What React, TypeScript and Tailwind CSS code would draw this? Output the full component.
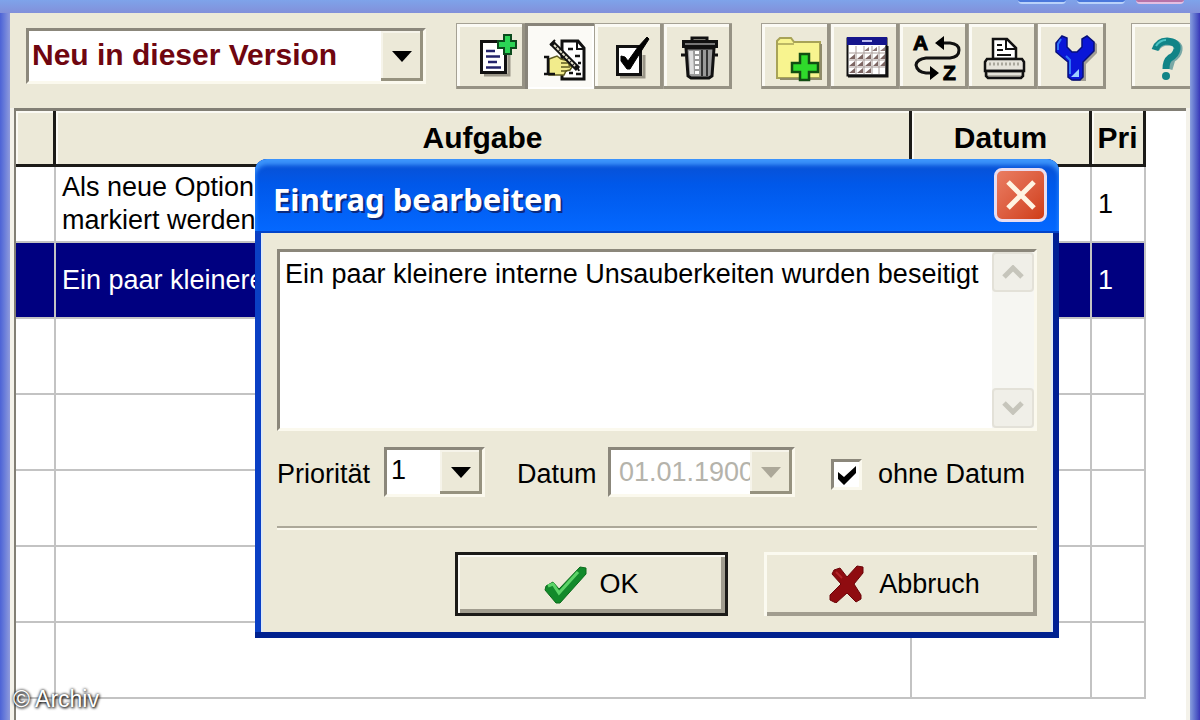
import React from 'react';
import { clsx } from 'clsx';

interface Task {
  lines: string[];
  priority: string;
  selected?: boolean;
}

const tasks: Task[] = [
  { lines: ['Als neue Option', 'markiert werden'], priority: '1' },
  { lines: ['Ein paar kleinere'], priority: '1', selected: true },
  { lines: [], priority: '' },
  { lines: [], priority: '' },
  { lines: [], priority: '' },
  { lines: [], priority: '' },
  { lines: [], priority: '' },
];

const Glyph = ({ children }: { children: React.ReactNode }) => (
  <svg viewBox="0 0 69 66" className="h-[66px] w-[69px] shrink-0" aria-hidden="true">
    {children}
  </svg>
);

const NewEntryIcon = () => (
  <Glyph>
    <path d="M28 52h25V28" fill="none" stroke="#9a9688" strokeWidth="3" />
    <rect x="25.500" y="18.500" width="24" height="31" fill="#fff" stroke="#111" strokeWidth="3" />
    <path d="M30 28h9M30 33.500h14M32 39h9M30 44.500h15" stroke="#23236b" strokeWidth="2.500" />
    <path d="M48 12h7v6h5v7h-5v6h-7v-6h-6v-7h6z" fill="#2bd455" stroke="#0b4a1c" strokeWidth="2" />
  </Glyph>
);

const EditIcon = () => (
  <Glyph>
    <path d="M37 18h16l6 7v31H37z" fill="#fff" stroke="#111" strokeWidth="3" />
    <path d="M52 18v8h7" fill="none" stroke="#111" strokeWidth="2" />
    <path d="M43 26h5M50 33h5M53 40h3M44 50h4M51 51h5" stroke="#111" strokeWidth="2.500" />
    <path d="M24 36l8-3 4 3 8 2v4l3 2-2 3-4 1-2 4H24z" fill="#f2ec8c" stroke="#5d5a20" strokeWidth="1.500" />
    <path d="M36 40h9M36 44h9M36 48h6" stroke="#5d5a20" strokeWidth="1.500" />
    <path d="M19 34h4v17h-4M23 51h7" fill="none" stroke="#111" strokeWidth="2.500" />
    <path d="M27 20l26 26" stroke="#111" strokeWidth="6" />
    <path d="M29 22l21 21" stroke="#e8e4cf" strokeWidth="2" strokeDasharray="3 1" />
    <path d="M25 22l5-5M52 43l2 5" stroke="#111" strokeWidth="2" />
  </Glyph>
);

const DoneIcon = () => (
  <Glyph>
    <path d="M26 54h24V32" fill="none" stroke="#9a9688" strokeWidth="3" />
    <rect x="23.500" y="23.500" width="23" height="28" fill="#fff" stroke="#111" strokeWidth="3" />
    <path d="M27 33l4 1 3 4 10-14 9-10 2 2-9 14-10 16h-3l-6-8z" fill="#000" stroke="#000" />
  </Glyph>
);

const TrashIcon = () => (
  <Glyph>
    <path d="M29 18v-3h15v3" fill="none" stroke="#111" strokeWidth="3" />
    <rect x="20.500" y="18.500" width="33" height="5" fill="#777" stroke="#111" strokeWidth="3" />
    <path d="M23 25h28l-2 28-3 2H28l-3-2z" fill="#9a9a9a" stroke="#111" strokeWidth="3" />
    <path d="M28 28l1 23" stroke="#ddd" strokeWidth="4" />
    <path d="M34 28v24" stroke="#fff" strokeWidth="4" strokeDasharray="3 2" />
    <path d="M39 27v26M44 27v26" stroke="#333" strokeWidth="2" />
    <path d="M18 32h4M52 32h3" stroke="#111" strokeWidth="3" />
  </Glyph>
);

const NewFolderIcon = () => (
  <Glyph>
    <path d="M16 55V18l3-3h11l3 4h26v36z" fill="#f8f48f" stroke="#a8a357" strokeWidth="2" />
    <path d="M17 21h16" stroke="#a8a357" strokeWidth="1.500" />
    <path d="M60 21v35H19" fill="none" stroke="#8f8b6a" strokeWidth="2" />
    <path d="M39 31h9v9h9v9h-9v8h-9v-8h-8v-9h8z" fill="#2fdb2b" stroke="#124d12" strokeWidth="2.500" />
  </Glyph>
);

const CalendarIcon = () => (
  <Glyph>
    <rect x="17.500" y="15.500" width="39" height="37" fill="#fff" stroke="#111" strokeWidth="2" />
    <rect x="17" y="14" width="40" height="8" fill="#15158c" />
    <path d="M32 18h10" stroke="#b9b9ee" strokeWidth="2" />
    <path d="M34 28l5-4v4zM42 28l5-4v4zM50 28l5-4v4z" fill="#8c7775" />
    <path
      d="M19 36l6-5v5zM27 36l6-5v5zM35 36l6-5v5zM43 36l5-5v5zM50 36l5-5v5zM19 43l6-5v5zM27 43l6-5v5zM35 43l6-5v5zM43 43l5-5v5zM50 43l5-5v5zM19 50l6-5v5zM27 50l6-5v5zM35 50l6-5v5z"
      fill="#7d6663"
    />
    <path d="M19 30h37M19 37h37M19 44h37M26 23v28M34 23v28M42 23v28M49 23v28" stroke="#a89b98" />
    <path d="M18 53h39V23" fill="none" stroke="#111" strokeWidth="3" />
  </Glyph>
);

const SortIcon = () => (
  <Glyph>
    <text x="14" y="27" fontFamily="Liberation Sans, sans-serif" fontWeight="700" fontSize="21" stroke="#000">A</text>
    <text x="44" y="57" fontFamily="Liberation Sans, sans-serif" fontWeight="700" fontSize="21" stroke="#000">Z</text>
    <path
      d="M42 20h9q9 1 9 7q0 7-9 8H27q-9 1-10 7q1 7 10 8h5"
      fill="none"
      stroke="#111"
      strokeWidth="3"
    />
    <path d="M36 20l9-7v14zM40 50l-9-7v14z" fill="#000" />
  </Glyph>
);

const PrinterIcon = () => (
  <Glyph>
    <path d="M25 36V16h14l9 9v11z" fill="#fff" stroke="#111" strokeWidth="2.500" />
    <path d="M38 16v10h10M29 22h5M29 27h6M29 32h14" fill="none" stroke="#111" strokeWidth="2" />
    <path d="M19 36h35l2 3v9H17v-9z" fill="#e6e3da" stroke="#111" strokeWidth="2.500" />
    <path d="M21 41h31" stroke="#aaa79c" strokeWidth="3" strokeDasharray="2 2" />
    <path d="M18 48h37v5l-2 2H20l-2-2z" fill="#b5b2a8" stroke="#111" strokeWidth="2.500" />
    <path d="M20 51h33" stroke="#f4f2ea" strokeWidth="1.500" />
  </Glyph>
);

const WrenchIcon = () => (
  <Glyph>
    <path d="M28 17v9l5 6h7l5-6v-8l9-2 6 5v9l-11 11v17H36V42l-8-9z" fill="#a19e94" />
    <path
      d="M25 13l5 2v9l5 5h5l5-5v-8l5-3 7 6v9L46 39v15l-3 3h-8l-4-3V39L19 29v-9z"
      fill="#0a16d8"
      stroke="#07107a"
      strokeWidth="1.500"
    />
    <path d="M24 16l-3 5v6M29 33l4 4v14" fill="none" stroke="#2f74f5" strokeWidth="2" />
    <path d="M34 54l8-8v8z" fill="#9cd0ff" />
  </Glyph>
);

const HelpIcon = () => (
  <Glyph>
    <path d="M25 26q3-7 13-7q11 1 10 8q-1 6-7 9l-3 10" fill="none" stroke="#79a8a6" strokeWidth="7" />
    <path d="M24 27q3-9 12-9q11 1 10 8q-1 6-7 9q-4 3-4 11" fill="none" stroke="#118487" strokeWidth="7" />
    <path d="M25 23q4-6 10-6" fill="none" stroke="#4cc4c4" strokeWidth="2" />
    <circle cx="35" cy="53" r="4" fill="#118487" />
  </Glyph>
);

interface Tool {
  label: string;
  icon: React.ReactNode;
  pressed?: boolean;
}

const toolGroups: Tool[][] = [
  [
    { label: 'Neuer Eintrag', icon: <NewEntryIcon /> },
    { label: 'Eintrag bearbeiten', icon: <EditIcon />, pressed: true },
    { label: 'Erledigt', icon: <DoneIcon /> },
    { label: 'Eintrag entfernen', icon: <TrashIcon /> },
  ],
  [
    { label: 'Neue Liste', icon: <NewFolderIcon /> },
    { label: 'Kalender', icon: <CalendarIcon /> },
    { label: 'Sortieren', icon: <SortIcon /> },
    { label: 'Drucken', icon: <PrinterIcon /> },
    { label: 'Einstellungen', icon: <WrenchIcon /> },
  ],
  [{ label: 'Hilfe', icon: <HelpIcon /> }],
];

const ToolButton = ({ label, icon, pressed }: Tool) => (
  <button
    type="button"
    aria-label={label}
    aria-pressed={pressed}
    className={clsx(
      'flex h-[66px] w-[69px] shrink-0 items-center justify-center overflow-hidden',
      pressed
        ? 'bg-[#fbfaf6] shadow-[inset_3px_3px_0_#88847a,inset_-2px_-2px_0_#ffffff]'
        : 'bg-[#ece9d8] shadow-[inset_1px_1px_0_#a5a194,inset_-3px_-3px_0_#969284,inset_4px_4px_0_#fbfaf4]'
    )}
  >
    {icon}
  </button>
);

interface ComboProps {
  id: string;
  value: string;
  disabled?: boolean;
  label?: string;
  className: string;
  selectClassName: string;
}

const Combo = ({ id, value, disabled, label, className, selectClassName }: ComboProps) => (
  <div
    className={clsx(
      'relative shrink-0 border-[3px] border-t-[#8b877b] border-r-[#fbf9ee] border-b-[#fbf9ee] border-l-[#8b877b] bg-white',
      className
    )}
  >
    <select
      id={id}
      aria-label={label}
      defaultValue={value}
      disabled={disabled}
      className={clsx(
        'block h-full w-full appearance-none overflow-hidden bg-transparent pr-[42px] whitespace-nowrap opacity-100 outline-none',
        selectClassName
      )}
    >
      <option value={value}>{value}</option>
    </select>
    <span className="pointer-events-none absolute inset-y-0 right-0 flex w-[42px] items-center justify-center bg-[#ece9d8] shadow-[inset_-3px_-3px_0_#96927f,inset_2px_2px_0_#f6f4ea]">
      <svg viewBox="0 0 20 11" className="h-[11px] w-5" aria-hidden="true">
        <path d="M0 0h20L10 11z" fill={disabled ? '#aca899' : '#000'} />
      </svg>
    </span>
  </div>
);

const Toolbar = () => (
  <header className="flex h-[95px] shrink-0 items-start overflow-hidden bg-[#ece9d8] pt-[10px] pl-4">
    <Combo
      id="list"
      label="Liste"
      value="Neu in dieser Version"
      className="mt-[5px] h-[56px] w-[400px]"
      selectClassName="pb-1 pl-[3px] text-[30px] font-bold text-[#6f0610]"
    />
    <div className="ml-[30px] flex gap-[29px]">
      {toolGroups.map((group) => (
        <div key={group[0].label} className="flex last:-ml-1">
          {group.map((tool) => (
            <ToolButton key={tool.label} {...tool} />
          ))}
        </div>
      ))}
    </div>
  </header>
);

const headCell = 'border-r-[3px] border-b-[3px] border-[#1c1b18] bg-[#ece9d8] p-0 text-center text-[30px] leading-9 font-bold shadow-[inset_2px_2px_0_#fbfaf4]';
const bodyCell = 'border-r-2 border-b-2 border-[#c3c3c3] py-0 pl-[6px] text-left text-[27px] leading-[33px] whitespace-nowrap overflow-hidden';

const TaskTable = () => (
  <div className="mr-1 ml-1 min-h-0 flex-1 overflow-hidden border-t-[3px] border-l-2 border-[#827f75] bg-white pr-10">
    <table className="w-full table-fixed border-separate border-spacing-0">
      <colgroup>
        <col className="w-10" />
        <col />
        <col className="w-[180px]" />
        <col className="w-[54px]" />
      </colgroup>
      <thead>
        <tr className="h-14">
          <th className={headCell} />
          <th className={headCell}>Aufgabe</th>
          <th className={headCell}>Datum</th>
          <th className={headCell}>Pri</th>
        </tr>
      </thead>
      <tbody>
        {tasks.map((task, index) => (
          <tr key={index} className={clsx('h-[76px]', task.selected && 'bg-[#000080] text-white')}>
            <td className={bodyCell} />
            <td className={bodyCell}>
              {task.lines.map((line) => (
                <div key={line}>{line}</div>
              ))}
            </td>
            <td className={bodyCell} />
            <td className={bodyCell}>{task.priority}</td>
          </tr>
        ))}
      </tbody>
    </table>
  </div>
);

const ScrollButton = ({ label, path }: { label: string; path: string }) => (
  <button
    type="button"
    disabled
    aria-label={label}
    className="flex h-10 w-full items-center justify-center rounded-sm border-2 border-[#e3e1d8] bg-[#f0efe8]"
  >
    <svg viewBox="0 0 22 14" className="h-[14px] w-[22px]" fill="none" stroke="#c6c5bb" strokeWidth="5" aria-hidden="true">
      <path d={path} />
    </svg>
  </button>
);

const EditDialog = () => (
  <section
    role="dialog"
    aria-labelledby="dialog-title"
    className="absolute top-[159px] right-[141px] left-[255px] rounded-t-xl bg-linear-to-r from-[#0a3fc4] via-[#0a3fc4] to-[#001f94] px-[6px] pb-[6px] shadow-[inset_0_-6px_0_#00218f]"
  >
    <div className="-mx-[6px] flex h-[74px] items-center justify-between rounded-t-xl border-b-2 border-[#0344c9] bg-linear-to-b from-[#0a4fd0] via-[#0058ea] via-35% to-[#0468ff] pr-3 pl-[18px] shadow-[inset_0_6px_4px_#3c94fb]">
      <h2
        id="dialog-title"
        className="pt-2 font-['Noto_Sans',sans-serif] text-[31px] font-bold text-white [text-shadow:2px_2px_0_#0a2a80]"
      >
        Eintrag bearbeiten
      </h2>
      <button
        type="button"
        aria-label="Schließen"
        className="flex h-[54px] w-[53px] items-center justify-center rounded-lg border-[3px] border-[#e9ddf0] bg-linear-to-br from-[#ea7d62] to-[#cf3c16]"
      >
        <svg viewBox="0 0 30 30" className="size-[30px]" stroke="#fff4e2" strokeWidth="5" aria-hidden="true">
          <path d="M2 2l26 26M28 2L2 28" />
        </svg>
      </button>
    </div>

    <form className="border-x-2 border-[#dfe9f4] bg-[#ece9d8] px-[14px] pt-4 pb-4" onSubmit={(e) => e.preventDefault()}>
      <div className="flex h-[182px] border-[3px] border-t-[#8b877b] border-r-[#fbf9ee] border-b-[#fbf9ee] border-l-[#8b877b] bg-white">
        <textarea
          aria-label="Aufgabe"
          defaultValue="Ein paar kleinere interne Unsauberkeiten wurden beseitigt"
          className="min-w-0 flex-1 resize-none overflow-hidden pt-[6px] pl-[5px] text-[27px] leading-[33px] outline-none"
        />
        <div className="flex w-[42px] shrink-0 flex-col justify-between bg-[#f6f6f2]">
          <ScrollButton label="Nach oben" path="M2 12l9-9 9 9" />
          <ScrollButton label="Nach unten" path="M2 2l9 9 9-9" />
        </div>
      </div>

      <div className="mt-4 flex h-[50px] items-center text-[27px]">
        <label htmlFor="priority" className="w-[107px] shrink-0 pt-1">
          Priorität
        </label>
        <Combo id="priority" value="1" className="h-[50px] w-[101px]" selectClassName="pb-1 pl-1" />
        <label htmlFor="date" className="ml-8 w-[91px] shrink-0 pt-1">
          Datum
        </label>
        <Combo
          id="date"
          value="01.01.1900"
          disabled
          className="h-[50px] w-[187px]"
          selectClassName="pl-2 text-[#b5b3ab]"
        />
        <label className="ml-9 flex items-center gap-4 pt-1 whitespace-nowrap">
          <span className="grid">
            <input
              type="checkbox"
              defaultChecked
              className="peer col-start-1 row-start-1 size-[31px] appearance-none border-[3px] border-t-[#8b877b] border-r-[#fbf9ee] border-b-[#fbf9ee] border-l-[#8b877b] bg-white"
            />
            <svg
              viewBox="0 0 31 31"
              className="pointer-events-none invisible col-start-1 row-start-1 size-[31px] peer-checked:visible"
              aria-hidden="true"
            >
              <path d="M7 13l6 5L25 7v7L13 26l-6-6z" fill="#000" />
            </svg>
          </span>
          ohne Datum
        </label>
      </div>

      <hr className="mt-[29px] h-1 border-t-2 border-b-2 border-t-[#aca899] border-b-[#fbf9ee]" />

      <div className="mt-[22px] flex justify-end gap-9 text-[27px]">
        <button
          type="submit"
          className="flex h-16 w-[273px] items-center justify-center gap-3 border-[3px] border-[#1c1b18] shadow-[inset_2px_2px_0_#fbfaf4,inset_-4px_-4px_0_#a19d8f]"
        >
          <svg viewBox="0 0 43 39" className="h-[39px] w-[43px]" aria-hidden="true">
            <path d="M2 21l7-4 6 7L36 2l6 1v6L16 38h-4L1 25z" fill="#128a2b" stroke="#0a6c1b" />
            <path d="M4 21l5-2 6 9L34 7" fill="none" stroke="#5cd468" strokeWidth="3" />
          </svg>
          OK
        </button>
        <button
          type="button"
          className="flex h-16 w-[273px] items-center justify-center gap-[14px] pl-2 shadow-[inset_3px_3px_0_#fbfaf0,inset_-4px_-4px_0_#a19d8f]"
        >
          <svg viewBox="0 0 36 38" className="h-[38px] w-9" aria-hidden="true">
            <path
              d="M5 5l6-2 7 9L28 1l6 1v6l-9 11 7 11v4l-5 3-9-9-11 10-6-3v-5l11-11L3 9z"
              fill="#8f0c10"
              stroke="#6b0509"
            />
            <path d="M7 7l6 6" stroke="#b3262a" strokeWidth="2" />
          </svg>
          Abbruch
        </button>
      </div>
    </form>
  </section>
);

export default function App() {
  return (
    <main className="relative flex h-screen flex-col overflow-hidden font-['Liberation_Sans',Arial,sans-serif] text-black">
      <div className="flex h-[13px] shrink-0 justify-end gap-[11px] bg-linear-to-b from-[#7ea3ea] to-[#8290da] pr-4">
        <span className="h-1 w-12 rounded-b-md border-b-2 border-[#b9d2fa] bg-[#4a78dc]" />
        <span className="h-1 w-12 rounded-b-md border-b-2 border-[#b9d2fa] bg-[#4a78dc]" />
        <span className="h-1 w-12 rounded-b-md border-b-2 border-[#e2bfe2] bg-[#b673a8]" />
      </div>
      <div className="flex min-h-0 flex-1">
        <div className="w-[10px] shrink-0 bg-linear-to-r from-[#4c62d6] to-[#8f9adc]" />
        <div className="flex min-w-0 flex-1 flex-col bg-[#f4f2ea]">
          <Toolbar />
          <TaskTable />
        </div>
        <div className="w-[10px] shrink-0 bg-linear-to-r from-[#8a9fde] to-[#3a36b8]" />
      </div>
      <EditDialog />
      <p className="absolute bottom-[9px] left-[13px] text-[23px] leading-6 text-white [text-shadow:0_0_3px_#000,1px_1px_3px_#000]">
        © Archiv
      </p>
    </main>
  );
}
